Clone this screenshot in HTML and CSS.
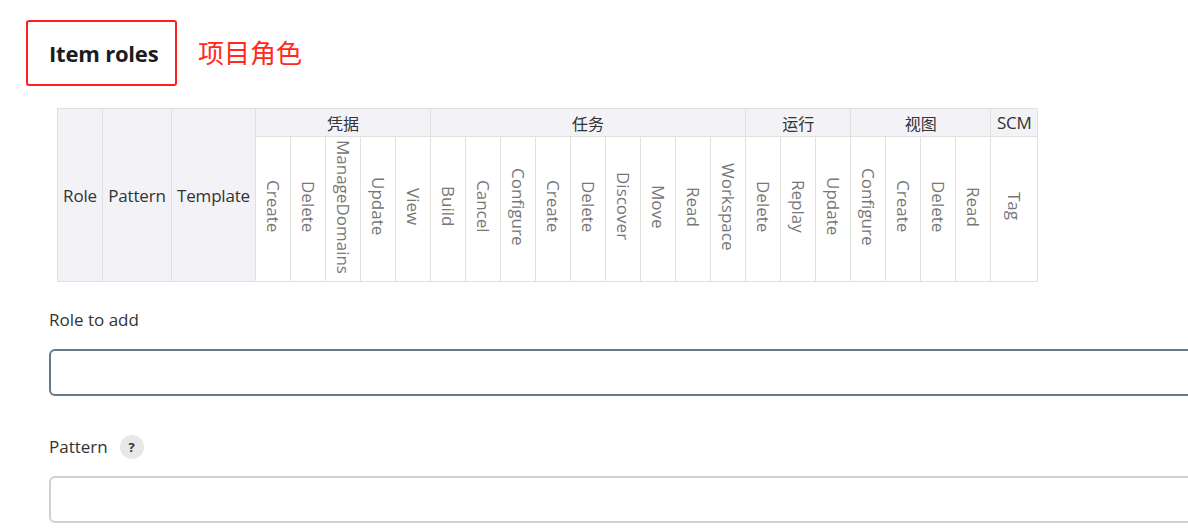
FILE: index.html
```html
<!DOCTYPE html>
<html lang="en">
<head>
<meta charset="utf-8">
<title>Item roles</title>
<link rel="stylesheet" href="styles.css">
</head>
<body>
<div class="page">
  <div class="title-row">
    <div class="title-box"><h2 class="title">Item roles</h2></div>
    <span class="annotation">项目角色</span>
  </div>

  <table class="perm-table">
    <colgroup>
      <col class="c-role"><col class="c-pattern"><col class="c-template">
      <col class="c-perm"><col class="c-perm"><col class="c-perm"><col class="c-perm"><col class="c-perm">
      <col class="c-perm"><col class="c-perm"><col class="c-perm"><col class="c-perm"><col class="c-perm"><col class="c-perm"><col class="c-perm"><col class="c-perm"><col class="c-perm">
      <col class="c-perm"><col class="c-perm"><col class="c-perm">
      <col class="c-perm"><col class="c-perm"><col class="c-perm"><col class="c-perm">
      <col class="c-scm">
    </colgroup>
    <thead>
      <tr class="group-row">
        <th rowspan="2" class="fixed">Role</th>
        <th rowspan="2" class="fixed">Pattern</th>
        <th rowspan="2" class="fixed">Template</th>
        <th colspan="5" class="group">凭据</th>
        <th colspan="9" class="group">任务</th>
        <th colspan="3" class="group">运行</th>
        <th colspan="4" class="group">视图</th>
        <th class="group scm">SCM</th>
      </tr>
      <tr class="perm-row">
        <th class="perm"><span>Create</span></th>
        <th class="perm"><span>Delete</span></th>
        <th class="perm"><span>ManageDomains</span></th>
        <th class="perm"><span>Update</span></th>
        <th class="perm"><span>View</span></th>
        <th class="perm"><span>Build</span></th>
        <th class="perm"><span>Cancel</span></th>
        <th class="perm"><span>Configure</span></th>
        <th class="perm"><span>Create</span></th>
        <th class="perm"><span>Delete</span></th>
        <th class="perm"><span>Discover</span></th>
        <th class="perm"><span>Move</span></th>
        <th class="perm"><span>Read</span></th>
        <th class="perm"><span>Workspace</span></th>
        <th class="perm"><span>Delete</span></th>
        <th class="perm"><span>Replay</span></th>
        <th class="perm"><span>Update</span></th>
        <th class="perm"><span>Configure</span></th>
        <th class="perm"><span>Create</span></th>
        <th class="perm"><span>Delete</span></th>
        <th class="perm"><span>Read</span></th>
        <th class="perm"><span>Tag</span></th>
      </tr>
    </thead>
  </table>

  <div class="field">
    <label class="field-label">Role to add</label>
    <div class="input-clip"><input class="text-input focused" type="text"></div>
  </div>

  <div class="field">
    <div class="field-label">Pattern <span class="help">?</span></div>
    <div class="input-clip"><input class="text-input" type="text"></div>
  </div>
</div>
</body>
</html>
```

FILE: styles.css
```css
html, body {
  margin: 0;
  padding: 0;
  background: #ffffff;
  overflow: hidden;
}

body {
  font-family: "Open Sans", "Noto Sans", "Noto Sans CJK SC", sans-serif;
  color: #333;
  width: 1188px;
  height: 530px;
}

.page {
  padding: 20px 0 0 26px;
  overflow: hidden;
}

.title-row {
  display: flex;
  align-items: center;
  gap: 21px;
}

.title-box {
  box-sizing: border-box;
  width: 151px;
  height: 66px;
  border: 2px solid #ff1f1f;
  border-radius: 3px;
  display: flex;
  align-items: center;
  padding-left: 21px;
}

.title {
  margin: 0;
  font-size: 22px;
  font-weight: 700;
  color: #1b1b22;
  letter-spacing: -0.2px;
  white-space: nowrap;
}

.annotation {
  font-family: "Noto Sans CJK SC", sans-serif;
  font-size: 26px;
  color: #ff2a1a;
  margin-top: -4px;
}

.perm-table {
  margin: 22px 0 0 31px;
  border-collapse: collapse;
  table-layout: fixed;
  width: 980px;
}

.c-role { width: 45px; }
.c-pattern { width: 69px; }
.c-template { width: 84px; }
.c-perm { width: 35px; }
.c-scm { width: 47px; }

.perm-table th {
  border: 1px solid #e0e0dc;
  padding: 0;
  font-weight: 400;
  font-size: 17px;
  color: #333;
}

.fixed {
  background: #f2f2f7;
  text-align: center;
  white-space: nowrap;
  letter-spacing: -0.2px;
}

.group-row {
  height: 28px;
}

.group {
  background: #f2f2f7;
  font-family: "Noto Sans CJK SC", sans-serif;
  text-align: center;
}

.perm-table th.group {
  font-size: 16px;
}

.perm-table th.group.scm {
  font-family: "Open Sans", sans-serif;
  font-size: 17px;
  letter-spacing: -0.3px;
}

.perm-row {
  height: 145px;
}

.perm {
  background: #fff;
  vertical-align: middle;
  text-align: center;
}

.perm span {
  writing-mode: vertical-rl;
  display: inline-block;
  color: #777;
  font-size: 17px;
  line-height: 20px;
}

.field {
  margin: 26px 0 0 23px;
}

.field-label {
  display: flex;
  align-items: center;
  gap: 12px;
  font-size: 17px;
  color: #333;
  line-height: 24px;
}

.help {
  display: inline-flex;
  align-items: center;
  justify-content: center;
  width: 24px;
  height: 24px;
  border-radius: 50%;
  background: #e8e8ea;
  color: #333;
  font-size: 13px;
  font-weight: 700;
}

.input-clip {
  margin-top: 17px;
  overflow: hidden;
}

.text-input {
  display: block;
  box-sizing: border-box;
  width: calc(100% + 20px);
  height: 47px;
  margin: 0;
  border: 2px solid #c9d1d8;
  border-radius: 6px;
  background: #fff;
  outline: none;
}

.text-input.focused {
  border-color: #62798e;
}

.field + .field {
  margin-top: 39px;
}
```
